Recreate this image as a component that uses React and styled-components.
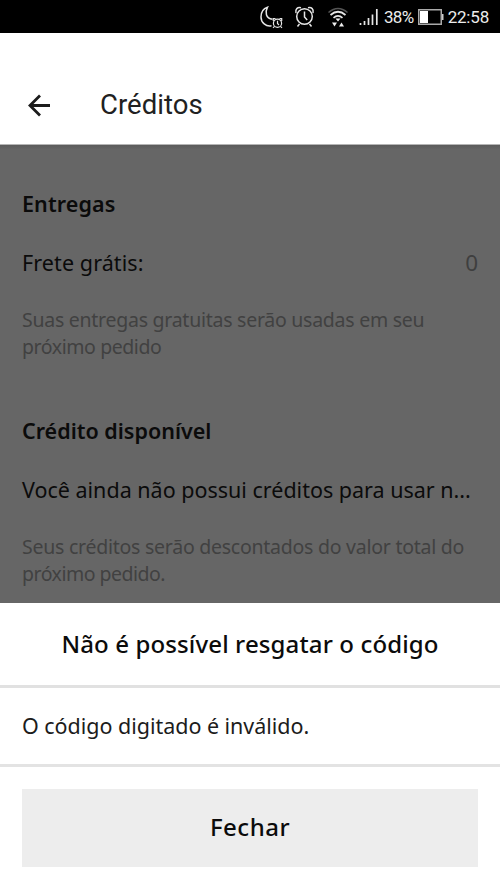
import React from "react";
import styled, { createGlobalStyle } from "styled-components";

const GlobalStyle = createGlobalStyle`
  * { box-sizing: border-box; }
  body { margin: 0; background: #fff; }
`;

const Screen = styled.div`
  width: 500px;
  height: 889px;
  display: flex;
  flex-direction: column;
  overflow: hidden;
  background: #fff;
  font-family: "Noto Sans", sans-serif;
  color: #0b0b0b;
`;

const StatusBar = styled.div`
  height: 33px;
  flex: none;
  display: flex;
  align-items: center;
  justify-content: flex-end;
  padding-right: 11px;
  background: #000;
  color: #ececec;
  font: 400 17px/33px Roboto, sans-serif;
`;

const StatusIcons = styled.svg`
  display: block;
  margin-right: 4px;
`;

const BatteryIcon = styled.svg`
  display: block;
  margin: 0 4px;
`;

const StatusText = styled.span`
  letter-spacing: ${(p) => p.$spacing}px;
  padding-top: 2px;
`;

const AppBar = styled.header`
  height: 112px;
  flex: none;
  display: flex;
  align-items: center;
  padding: 32px 0 0 24px;
  background: #fff;
  border-bottom: 1px solid #b5b5b5;
`;

const BackButton = styled.button`
  display: flex;
  padding: 0;
  border: 0;
  background: none;
  color: #1c1c1c;
`;

const PageTitle = styled.h1`
  margin: 0 0 0 45px;
  font: 400 27.5px/36px Roboto, sans-serif;
  letter-spacing: ${(p) => p.$spacing}px;
  color: #212121;
`;

const Page = styled.main`
  height: 458px;
  flex: none;
  display: flex;
  flex-direction: column;
  gap: 55px;
  padding: 44px 22px 0;
  background: linear-gradient(#5b5b5b, #666 5px);
`;

const Section = styled.section`
  height: 172px;
  flex: none;
`;

const SectionTitle = styled.h2`
  margin: 0;
  font-size: 21.5px;
  font-weight: 600;
  line-height: 30px;
  letter-spacing: ${(p) => p.$spacing}px;
  white-space: nowrap;
`;

const Row = styled.div`
  display: flex;
  justify-content: space-between;
  margin-top: 29px;
  font-size: 21.5px;
  line-height: 30px;
  white-space: nowrap;
`;

const Label = styled.span`
  letter-spacing: ${(p) => p.$spacing}px;
`;

const Count = styled.span`
  color: #3f3f3f;
  font-size: 22.5px;
`;

const Hint = styled.p`
  margin: 28px 0 0;
  font-size: 19.5px;
  line-height: 27px;
  color: #414141;
  white-space: nowrap;
`;

const HintLine = styled.span`
  display: block;
  letter-spacing: ${(p) => p.$spacing}px;
`;

const Sheet = styled.div`
  flex: 1;
  display: flex;
  flex-direction: column;
  background: #fff;
`;

const SheetTitle = styled.h2`
  height: 85px;
  margin: 0;
  border-bottom: 3px solid #e1e1e1;
  font-size: 24px;
  font-weight: 500;
  line-height: 82px;
  text-align: center;
  letter-spacing: ${(p) => p.$spacing}px;
  white-space: nowrap;
`;

const SheetMessage = styled.p`
  height: 79px;
  margin: 0;
  padding-left: 22px;
  border-bottom: 3px solid #e3e3e3;
  color: #1c1c1c;
  font-size: 21.5px;
  line-height: 75px;
  letter-spacing: ${(p) => p.$spacing}px;
`;

const CloseButton = styled.button`
  height: 78px;
  margin: 22px 22px 0;
  padding: 0 0 2px;
  border: 0;
  background: #ededed;
  color: #0b0b0b;
  font: 500 24px/76px "Noto Sans", sans-serif;
  letter-spacing: ${(p) => p.$spacing}px;
`;

function SystemIcons() {
  return (
    <StatusIcons width="120" height="33" viewBox="260 0 120 33" fill="none" stroke="#e6e6e6" strokeWidth="1.5">
      <path d="M271.500 25.800C266 27 261 22.500 261 17C261 12 263.500 8.500 267.500 7.200C265 12 265.500 18.500 272.500 19.200" />
      <circle cx="277.500" cy="23.300" r="4.100" strokeWidth="1.200" />
      <path d="M277.500 20.800V23.500L279 25M273.300 21V18.700H275.500M279.500 18.700H281.700V21M273 27.800L274.500 26.300M282 27.800L280.500 26.300" strokeWidth="1.200" />
      <circle cx="304.500" cy="16.500" r="7.800" />
      <path d="M304.500 11.500V17L307.200 20M299.500 24L297.500 26.500M309.500 24L311.500 26.500" />
      <path d="M296 13C295 9 297.500 7 301 7.800M313 13C314 9 311.500 7 308 7.800" />
      <path d="M328.500 12.500Q338 4.500 347.500 12.500" stroke="#555" />
      <path d="M330.500 15Q338 8.500 345.500 15M333.500 17.800Q338 14 342.500 17.800" strokeWidth="1.700" />
      <path d="M335.500 18.500H340.500L338 21.500ZM332 22.500H337L334.500 26.500ZM339 26.500H344L341.500 22.500Z" fill="#eee" stroke="none" />
      <path d="M360.500 23V25M364.500 21V25M368.500 18V25M372.500 14.500V25M376.800 9V25" strokeWidth="1.700" />
    </StatusIcons>
  );
}

export default function App() {
  return (
    <>
      <GlobalStyle />
      <Screen>
        <StatusBar>
          <SystemIcons />
          <StatusText $spacing={-0.6}>38%</StatusText>
          <BatteryIcon width="26" height="16" viewBox="0 0 26 16">
            <rect x="0.750" y="0.750" width="22.500" height="14.500" fill="none" stroke="#aaa" strokeWidth="1.500" />
            <rect x="2" y="2" width="8" height="12" fill="#fff" />
            <rect x="24" y="5" width="1.500" height="6" fill="#ccc" />
          </BatteryIcon>
          <StatusText $spacing={-0.2}>22:58</StatusText>
        </StatusBar>
        <AppBar>
          <BackButton aria-label="Voltar">
            <svg width="31" height="28" viewBox="0 0 31 28" fill="none" stroke="currentColor" strokeWidth="2.800">
              <path d="M26 14.500H6M16 4.500L6 14.500L16 24.500" />
            </svg>
          </BackButton>
          <PageTitle $spacing={0.05}>Créditos</PageTitle>
        </AppBar>
        <Page>
          <Section>
            <SectionTitle $spacing={0.1}>Entregas</SectionTitle>
            <Row>
              <Label $spacing={0.1}>Frete grátis:</Label>
              <Count>0</Count>
            </Row>
            <Hint>
              <HintLine $spacing={-0.26}>Suas entregas gratuitas serão usadas em seu</HintLine>
              <HintLine $spacing={-0.42}>próximo pedido</HintLine>
            </Hint>
          </Section>
          <Section>
            <SectionTitle $spacing={0}>Crédito disponível</SectionTitle>
            <Row>
              <Label $spacing={0}>Você ainda não possui créditos para usar n...</Label>
            </Row>
            <Hint>
              <HintLine $spacing={-0.25}>Seus créditos serão descontados do valor total do</HintLine>
              <HintLine $spacing={-0.5}>próximo pedido.</HintLine>
            </Hint>
          </Section>
        </Page>
        <Sheet>
          <SheetTitle $spacing={0.13}>Não é possível resgatar o código</SheetTitle>
          <SheetMessage $spacing={-0.03}>O código digitado é inválido.</SheetMessage>
          <CloseButton $spacing={0.5}>Fechar</CloseButton>
        </Sheet>
      </Screen>
    </>
  );
}
